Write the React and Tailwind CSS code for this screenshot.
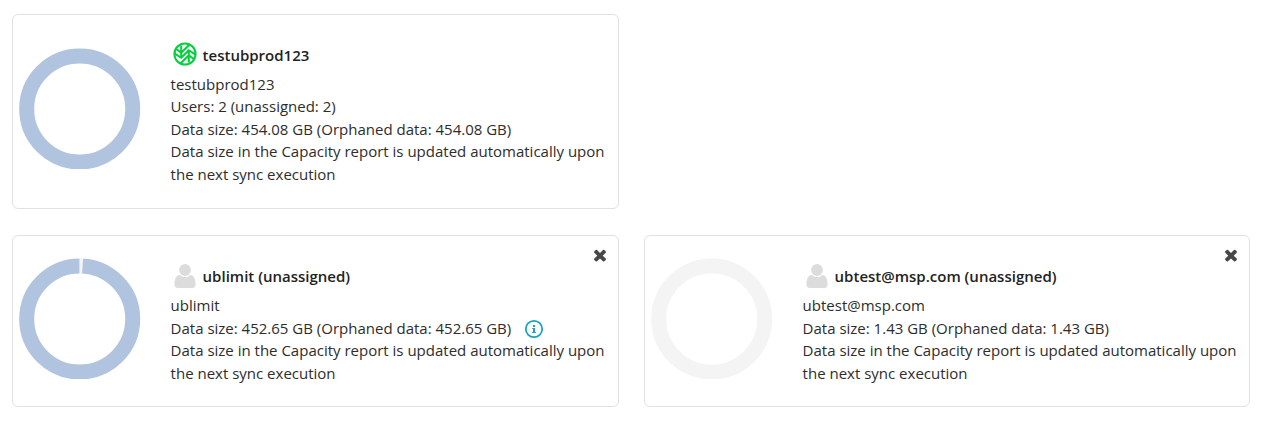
const UPDATE_NOTE =
  'Data size in the Capacity report is updated automatically upon the next sync execution';

function Donut({ color, gap }) {
  return (
    <svg className="block h-[121px] w-[122px] shrink-0" viewBox="0 0 122 121" aria-hidden="true">
      <circle cx="60.7" cy="61" r="53" fill="none" stroke={color} strokeWidth="15" />
      {gap && <path d="M60.4 0H64.1L63.1 16H60.4Z" fill="#f4f4f4" />}
    </svg>
  );
}

function LeafIcon() {
  return (
    <svg className="block h-6 w-6" viewBox="0 0 24 24" fill="none" stroke="#00d13b" strokeWidth="2" aria-hidden="true">
      <circle cx="12" cy="12" r="10.6" />
      <path d="M8.2 3.5V15.8M15.8 20.5V8.2M2.5 6.5L8.2 10.6L16.3 2.7M1.5 11.3L8.2 15.8L15.8 8.2L22.5 12.7M21.5 17.5L15.8 13.4L7.7 21.3" />
    </svg>
  );
}

function UserIcon() {
  return (
    <svg className="block h-6 w-6" viewBox="0 0 24 24" fill="#dcdcdc" aria-hidden="true">
      <circle cx="12" cy="6" r="5.9" />
      <path d="M6.8 10.9C8.1 12.3 9.9 13 12 13s3.9-.7 5.2-2.1C20.5 11.2 22.6 14.5 22.6 20c0 2.5-1.2 4-3.3 4H4.7c-2.1 0-3.3-1.5-3.3-4 0-5.5 2.1-8.8 5.4-9.1Z" />
    </svg>
  );
}

function CloseButton() {
  return (
    <button type="button" aria-label="Close" className="absolute right-[9px] top-[10px] text-[#484848]">
      <svg className="block h-[18px] w-[18px]" viewBox="0 0 1792 1792" fill="currentColor">
        <path d="M1490 1322q0 40-28 68l-136 136q-28 28-68 28t-68-28l-294-294-294 294q-28 28-68 28t-68-28l-136-136q-28-28-28-68t28-68l294-294-294-294q-28-28-28-68t28-68l136-136q28-28 68-28t68 28l294 294 294-294q28-28 68-28t68 28l136 136q28 28 28 68t-28 68l-294 294 294 294q28 28 28 68z" />
      </svg>
    </button>
  );
}

function InfoIcon() {
  return (
    <svg className="ml-[12.4px] mt-[2px] h-5 w-5 shrink-0" viewBox="0 0 20 20" fill="none" aria-hidden="true">
      <circle cx="10" cy="10" r="8.2" stroke="#1ba3bd" strokeWidth="1.8" />
      <path d="M9 6h2v2H9zM8.2 9H11v4h1v1H8.2v-1H9v-3h-.8z" fill="#1ba3bd" />
    </svg>
  );
}

function Card({ title, icon, lines, color, gap, closable, info, className, chartClass, textClass }) {
  return (
    <section className={`relative flex rounded-md border border-[#e1e1e1] bg-white pl-[6px] ${className}`}>
      <div className={`flex items-center ${chartClass}`}>
        <Donut color={color} gap={gap} />
      </div>
      <div className={`ml-[29.6px] w-[440px] ${textClass}`}>
        <h2 className="flex h-[30px] items-center text-[15px] font-semibold leading-[22.5px] text-[#222]">
          <span className="mr-[6px] pb-[7px] pl-[2px]">{icon}</span>
          <span className="pb-[5px]">{title}</span>
        </h2>
        {lines.map((line, i) => (
          <div key={line} className="flex h-[22.5px] items-center whitespace-nowrap">
            {line}
            {info && i === lines.length - 1 && <InfoIcon />}
          </div>
        ))}
        <p>{UPDATE_NOTE}</p>
      </div>
      {closable && <CloseButton />}
    </section>
  );
}

export default function App() {
  return (
    <main className="grid h-[445px] w-[1284px] grid-cols-[607px_606px] content-start gap-x-[25px] gap-y-[26px] bg-white pl-3 pt-[14px] font-['Open_Sans',sans-serif] text-[15px] leading-[22.5px] text-[#2d2d2d]">
      <Card
        className="col-span-2 h-[195px] w-[607px]"
        chartClass="pb-[7px]"
        textClass="pt-[27.8px]"
        title="testubprod123"
        icon={<LeafIcon />}
        color="#b0c3df"
        lines={['testubprod123', 'Users: 2 (unassigned: 2)', 'Data size: 454.08 GB (Orphaned data: 454.08 GB)']}
      />
      <Card
        className="h-[172px]"
        chartClass="pb-[5px]"
        textClass="pt-[28px]"
        title="ublimit (unassigned)"
        icon={<UserIcon />}
        color="#b0c3df"
        gap
        closable
        info
        lines={['ublimit', 'Data size: 452.65 GB (Orphaned data: 452.65 GB)']}
      />
      <Card
        className="h-[172px]"
        chartClass="pb-[5px]"
        textClass="pt-[28px]"
        title="ubtest@msp.com (unassigned)"
        icon={<UserIcon />}
        color="#f4f4f4"
        closable
        lines={['ubtest@msp.com', 'Data size: 1.43 GB (Orphaned data: 1.43 GB)']}
      />
    </main>
  );
}
